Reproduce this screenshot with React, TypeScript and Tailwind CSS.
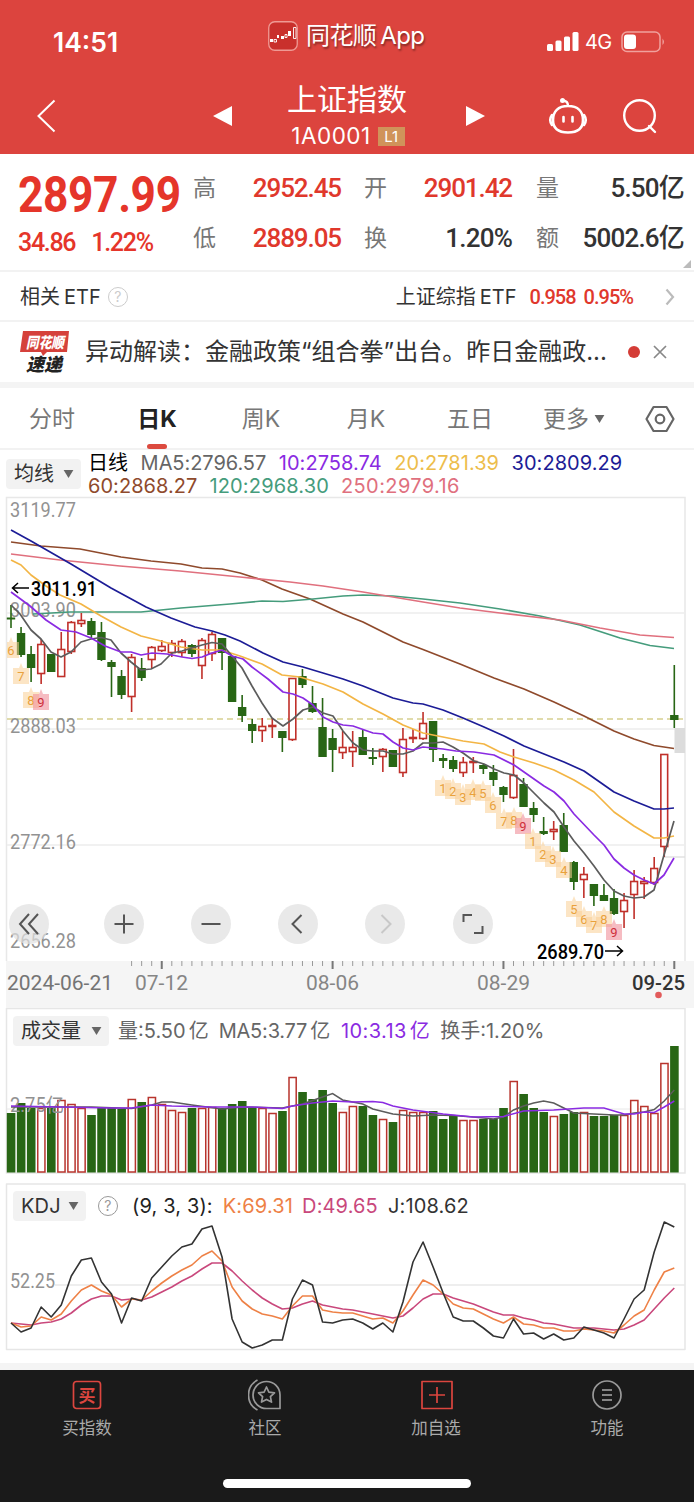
import type { ReactNode } from "react";

// [high, bodyTop, bodyBottom, low, up]
const CANDLES: [number, number, number, number, 0 | 1][] = [
  [605, 617.5, 619.5, 628, 0], [627, 633, 655, 657, 0], [646, 654, 668, 682, 0], [639, 644, 674, 684, 1],
  [654, 654, 672, 672, 0], [632, 649, 677, 677, 1], [621, 622, 652, 654, 1], [613, 620, 624, 627, 1],
  [618, 621, 635, 638, 0], [622, 632, 660, 661, 0], [660, 662, 667, 697, 0], [670, 676, 695, 699, 0],
  [654, 657, 697, 712, 1], [658, 668, 678, 681, 0], [646, 647, 660, 668, 1], [640, 646, 651, 652, 1],
  [640, 643, 653, 657, 1], [639, 641, 653, 657, 1], [644, 645, 654, 657, 0], [638, 640, 666, 679, 1],
  [632, 634, 654, 661, 1], [638, 638, 653, 670, 0], [656, 656, 702, 702, 0], [695, 707, 716, 722, 0],
  [719, 724, 731, 743, 0], [718, 726, 731, 742, 1], [718, 725, 727, 738, 1], [731, 731, 738, 752, 0],
  [678, 678, 740, 741, 1], [669, 676, 685, 688, 0], [686, 703, 712, 713, 0], [698, 727, 757, 757, 0],
  [729, 738, 750, 772, 0], [731, 747, 753, 759, 1], [731, 747, 752, 767, 1], [730, 737, 755, 755, 0],
  [748, 757, 759, 765, 0], [748, 749, 757, 772, 1], [750, 750, 767, 767, 0], [728, 739, 773, 777, 1],
  [729, 737, 739, 743, 1], [712, 723, 739, 740, 1], [721, 721, 750, 762, 0], [754, 758, 761, 768, 0],
  [756, 760, 769, 772, 0], [757, 762, 773, 777, 1], [757, 761, 762, 773, 1], [764, 765, 769, 774, 0],
  [765, 772, 780, 786, 0], [786, 787, 795, 802, 0], [749, 775, 798, 799, 1], [778, 784, 807, 807, 0],
  [802, 808, 815, 822, 0], [817, 831, 834, 835, 0], [821, 829, 832, 840, 1], [813, 825, 852, 852, 0],
  [861, 862, 882, 890, 0], [867, 874, 880, 898, 1], [884, 884, 896, 906, 0], [884, 895, 901, 901, 0],
  [889, 898, 914, 915, 0], [893, 900, 912, 928, 1], [870, 881, 895, 919, 1], [877, 881, 884, 899, 1],
  [857, 868, 883, 885, 1], [754, 754, 847, 857, 1], [665, 715, 720, 728, 0],
];

const VOLUME = [
  113, 103, 108, 108, 108, 100, 104, 108, 115, 108, 108, 109, 99, 102, 97, 104, 110, 112, 108, 108, 107, 108, 104,
  101, 108, 108, 113, 111, 77, 92, 99, 90, 103, 112, 106, 106, 115, 119, 122, 110, 112, 112, 111, 119, 115, 120, 120,
  119, 119, 108, 81, 94, 108, 112, 116, 114, 112, 112, 116, 116, 115, 115, 100, 106, 113, 63, 46,
];

const J = [
  143, 152, 148, 127, 137, 125, 96, 80, 78, 102, 114, 143, 118, 121, 98, 87, 76, 67, 64, 49, 46, 77, 139, 162, 168,
  165, 160, 160, 119, 100, 105, 142, 143, 140, 139, 143, 149, 143, 152, 122, 82, 62, 87, 113, 137, 141, 141, 148, 156,
  158, 139, 154, 153, 159, 154, 160, 158, 147, 150, 153, 158, 139, 119, 110, 72, 42, 47,
];
const K = [
  143, 147, 146, 137, 140, 134, 121, 110, 105, 111, 115, 127, 119, 120, 111, 103, 96, 90, 85, 76, 71, 81, 107, 121,
  129, 134, 136, 139, 126, 116, 116, 130, 132, 133, 133, 136, 139, 138, 143, 131, 115, 100, 105, 114, 124, 128, 129,
  134, 139, 143, 137, 144, 145, 148, 148, 151, 151, 149, 150, 151, 153, 145, 136, 130, 110, 92, 88,
];
const D = [
  143, 144, 145, 143, 142, 139, 133, 125, 119, 116, 116, 120, 119, 120, 117, 112, 107, 101, 96, 89, 83, 83, 91, 101,
  110, 118, 124, 129, 128, 124, 121, 125, 127, 129, 130, 132, 134, 136, 138, 136, 128, 119, 114, 114, 118, 121, 124,
  128, 132, 135, 135, 138, 140, 143, 144, 146, 148, 148, 148, 149, 150, 149, 145, 140, 129, 118, 108,
];

const MA_LINES = [
  { color: "#8f4a2c", points: "11,542 41,546 80,549 121,557 151,561 181,564 202,568 222,569 240,573 262,580 282,589 310,599 343,614 363,622 383,632 403,642 423,649.5 460,664 494,678 524,689 554,702 584,716 614,731 634,739 654,745.5 674,748.5" },
  { color: "#459c7c", points: "33,614 70,612 100,612 141,612 181,608 230,604 262,601 283,601.5 313,599 343,596 363,595 393,596 423,599 460,603 500,609 540,616 580,625 620,638 650,645.5 674,648.5" },
  { color: "#e0707e", points: "11,554 60,560 120,566 180,571 240,577 290,582 323,586 363,592 423,602 460,608 500,613 560,620 600,628 640,635 674,637.5" },
  { color: "#1c1c96", points: "11,530 31,541 71,564 111,588 146,607 171,618 195,627 212,631 225,635 240,641 263,653 283,662 303,667 323,673 343,679 363,686 393,698 413,703 423,704 443,710 463,718 484,727 504,736 524,746 544,754 564,762 584,771 604,785 614,792 634,801 654,809 664,809 674,808" },
  { color: "#f3b545", points: "11,560 21,565 31,575 46,586 60,595 81,604 101,616 121,627 141,636 161,641 181,647 202,650 221,650 240,656 262,664 282,675 300,677 323,684 343,692 363,704 383,714 403,725 423,733 443,737 463,741 484,744 500,752 514,757 534,763 554,770 574,780 594,792 614,812 634,826 654,838 664,838 674,836" },
  { color: "#5c5c5c", points: "11,605 20,614 31,630 41,639 51,652 61,657 71,652 81,642 91,639 101,637.5 111,640 121,653 131,662 141,670 151,669 161,664 172,653 182,651 202,645 212,642.5 222,644 232,656 242,668 252,686 262,703 272,718 283,726 293,719 303,710 313,707 323,713 333,716 343,731 353,743 363,750 373,751 383,751 393,754 403,754 413,751 423,743 433,743 443,742 453,747 463,753 474,761 484,764 494,769 504,773 514,775 524,783 534,793 544,803 554,812 564,827 574,841 584,853 594,866 604,880 614,891 624,896 634,898 644,897 654,890 664,855 674,821" },
  { color: "#8a2be2", points: "11,592 30,606 46,620 61,630 76,632 91,638 105,646 121,652 131,652 141,655 152,653 167,654 182,657 192,658.5 202,657 212,653 222,650 232,656 243,659 252,667 268,679 283,692 293,694 303,698 313,705 323,717 333,722 343,725 353,726 373,733 383,734 393,742 403,748 413,750 423,747 443,749 456,751 474,752 494,755 514,765 524,772 544,786 554,792 564,801 574,814 594,835 604,845 614,859 624,868 634,875 644,880 654,884 664,875 674,858" },
];

const VOL_MA5: [number, number][] = [
  [0, 107], [8, 107], [12, 108.5], [14, 105], [15, 102], [16, 102], [18, 105], [21, 109], [23, 107], [27, 108], [29, 104],
  [31, 97], [32, 93.5], [33, 100], [35, 104], [36, 109], [38, 114], [40, 116], [42, 115], [44, 115.5], [46, 117],
  [48, 119], [49, 117], [50, 110], [51, 106], [52, 103], [53, 101], [54, 103], [55, 108], [56, 113], [58, 114],
  [60, 115], [61, 115], [62, 113], [63, 112], [64, 109.5], [65, 101], [66, 90],
];
const VOL_MA10: [number, number][] = [
  [0, 106], [5, 107], [10, 108], [12, 108], [14, 105], [16, 106], [20, 107], [24, 107], [27, 108.5], [28, 106],
  [30, 103], [32, 101], [34, 102], [36, 101.5], [37, 102.5], [38, 106], [40, 110], [43, 114], [46, 117], [49, 116.5],
  [51, 111], [54, 110], [57, 108], [59, 108], [61, 114], [62, 114], [63, 112], [64, 112.5], [65, 107], [66, 101],
];

// [x, y, count]
const MARKS: [number, number, number][] = [
  [11, 650, 6], [21, 676, 7], [31, 700, 8], [41, 702, 9],
  [443, 788, 1], [453, 791, 2], [463, 797, 3], [473, 792, 4], [483, 793, 5], [493, 805, 6], [504, 821, 7],
  [514, 820, 8], [523, 826, 9], [533, 841, 1], [543, 854, 2], [553, 859, 3], [564, 870, 4],
  [574, 909, 5], [584, 919, 6], [594, 925, 7], [604, 919, 8], [614, 932, 9],
];

const TABS = [
  { label: "分时", width: "w-[104px]" },
  { label: "日K", width: "w-[106px]", active: true },
  { label: "周K", width: "w-[102px]" },
  { label: "月K", width: "w-[108px]" },
  { label: "五日", width: "w-[100px]" },
];

const AXIS_FONT = "Roboto, 'Noto Sans CJK SC', sans-serif";

const px = (i: number) => 11 + i * 10.05;
const series = (values: number[]) => values.map((v, i) => `${px(i)},${v + 1180}`).join(" ");
const pairs = (values: [number, number][]) => values.map(([i, v]) => `${px(i)},${v + 1000}`).join(" ");

function AxisLabel({ x, y, w, children, color = "#929292", weight = 400 }: { x: number; y: number; w: number; children: string; color?: string; weight?: number }) {
  return (
    <text x={x} y={y} textLength={w} lengthAdjust="spacingAndGlyphs" fontSize="19.5" fontWeight={weight} fontFamily={AXIS_FONT} fill={color}>
      {children}
    </text>
  );
}

function Caret({ className = "" }: { className?: string }) {
  return (
    <svg viewBox="0 0 12 9" className={`h-2 w-[11px] ${className}`}>
      <path d="M.5 0h11L6 9z" fill="#666" />
    </svg>
  );
}

function StatusBar() {
  return (
    <div className="flex h-[78px] items-center pt-[6px] text-white">
      <span className="w-[215px] pt-[2px] pl-[53px] text-[26.5px] font-semibold">14:51</span>
      <div className="flex w-[332px] items-center pb-3 pl-[53px]">
        <svg viewBox="0 0 30 30" className="size-[30px]">
          <rect x="0.75" y="0.75" width="28.5" height="28.5" rx="6" fill="#c9302c" stroke="#ef9a94" strokeWidth="1.3" />
          <g fill="#fff">
            <path d="M2 18h3v3H2zM9 14h2v3H9zM13 15h3v3h-3zM20 10h3v5h-3z" />
            <path d="M6 18.5h2.5v2.5H6zM17 13.5h2v3h-2zM25.5 6.5h2.5v11h-2.5z" fill="none" stroke="#fff" strokeWidth="0.9" />
          </g>
        </svg>
        <span className="ml-2 flex gap-1 text-[24px] leading-none tracking-[-0.6px] [text-shadow:1px_2px_2px_#0006]">
          <span>同花顺</span>
          <span>App</span>
        </span>
      </div>
      <svg viewBox="0 0 32 20" className="h-5 w-8" fill="#fff">
        <rect x="0" y="12" width="6" height="7" rx="1.5" />
        <rect x="8.5" y="8.5" width="6" height="10.5" rx="1.5" />
        <rect x="17" y="4.5" width="6" height="14.5" rx="1.5" />
        <rect x="25.5" y="0" width="6" height="19" rx="1.5" />
      </svg>
      <span className="ml-[6px] w-9 text-[20px] tracking-[-0.6px]">4G</span>
      <svg viewBox="0 0 46 22" className="h-[22px] w-[46px]">
        <rect x="1" y="1" width="38" height="19.5" rx="5" fill="none" stroke="#f0a19d" strokeWidth="1.5" />
        <rect x="3" y="3.5" width="12" height="14.5" rx="3" fill="#fff" />
        <path d="M41.5 7.5q3 3.3 0 6.5z" fill="#f0a19d" />
      </svg>
    </div>
  );
}

function TitleBar() {
  return (
    <div className="flex h-[76px] items-center text-white">
      <svg viewBox="0 0 20 34" className="ml-9 h-[34px] w-5">
        <path d="M18.5 1.5 2.5 17l16 15.5" fill="none" stroke="#fff" strokeWidth="2" />
      </svg>
      <svg viewBox="0 0 19 20" className="ml-[157px] h-5 w-[19px]">
        <path d="M19 0v20L0 10z" fill="#fff" />
      </svg>
      <div className="flex w-[234px] flex-col items-center">
        <span className="mr-1 text-[30px] leading-[36px]">上证指数</span>
        <span className="mt-1 mr-[2px] flex items-center text-[22.5px] leading-[30px] tracking-[0.5px]">
          1A0001
          <span className="ml-[7px] h-[19px] w-[27px] bg-[#d0935a] text-center text-[15px] leading-[19px] tracking-normal">L1</span>
        </span>
      </div>
      <svg viewBox="0 0 19 20" className="h-5 w-[19px]">
        <path d="M0 0v20l19-10z" fill="#fff" />
      </svg>
      <svg viewBox="0 0 40 38" className="ml-[63px] h-[38px] w-10" fill="none" stroke="#fff" strokeWidth="2.6">
        <path d="M20 9c-10 0-15 5.500-15 14s5 12.500 15 12.500S35 31.500 35 23 30 9 20 9zM20 9c0-3.500-1-5-5-5.500" />
        <circle cx="14.5" cy="3.5" r="1.2" fill="#fff" />
        <path d="M4 18q-3.500 5 0 10M36 18q3.500 5 0 10M15.500 20v4.500M24.500 20v4.500" strokeLinecap="round" />
      </svg>
      <svg viewBox="0 0 36 36" className="ml-[34px] size-9" fill="none" stroke="#fff" strokeWidth="2.4">
        <circle cx="17.5" cy="17.5" r="15.3" />
        <path d="m27 28 6 6" strokeLinecap="round" />
      </svg>
    </div>
  );
}

function Stat({ label, value, red = false, className }: { label: string; value: string; red?: boolean; className: string }) {
  return (
    <div className={`flex h-[50px] items-center justify-between ${className}`}>
      <span className="text-[23px] text-[#777]">{label}</span>
      <span className={`font-[Roboto,'Noto_Sans_CJK_SC',sans-serif] text-[26px] font-medium ${red ? "tracking-[-1.1px] text-[#e0382c]" : "tracking-[-0.8px] text-[#333]"}`}>{value}</span>
    </div>
  );
}

function Quote() {
  return (
    <section className="relative flex h-[118px] border-b-2 border-[#f2f2f2] bg-white">
      <div className="w-[193px] pl-[18px] font-[Roboto,sans-serif] text-[#e5352a]">
        <div className="mt-[15px] origin-left scale-x-[0.885] text-[50px] leading-[52px] font-bold tracking-[-0.4px] whitespace-nowrap">2897.99</div>
        <div className="mt-[8px] flex gap-4 text-[25px] leading-[28px] font-medium tracking-[-1.3px]">
          <span>34.86</span>
          <span>1.22%</span>
        </div>
      </div>
      <div className="pt-[9px]">
        <div className="flex">
          <Stat label="高" value="2952.45" red className="w-[148px]" />
          <Stat label="开" value="2901.42" red className="ml-[23px] w-[148px]" />
          <Stat label="量" value="5.50亿" className="ml-[24px] w-[148px]" />
        </div>
        <div className="flex">
          <Stat label="低" value="2889.05" red className="w-[148px]" />
          <Stat label="换" value="1.20%" className="ml-[23px] w-[148px]" />
          <Stat label="额" value="5002.6亿" className="ml-[24px] w-[148px]" />
        </div>
      </div>
      <svg viewBox="0 0 8 8" className="absolute right-[3px] bottom-[2px] size-2">
        <path d="M8 0v8H0z" fill="#bbb" />
      </svg>
    </section>
  );
}

function RelatedEtf() {
  return (
    <section className="flex h-[50px] items-center border-b-2 border-[#f2f2f2] bg-white pt-[2px] pr-[19px] pl-5 text-[20px] text-[#333]">
      <span className="flex gap-1">
        <span>相关</span>
        <span>ETF</span>
      </span>
      <Help className="ml-[7px] text-[#ccc]" />
      <span className="ml-auto flex gap-1">
        <span>上证综指</span>
        <span>ETF</span>
      </span>
      <span className="ml-[13px] flex gap-2 font-[Roboto,sans-serif] font-medium tracking-[-1px] text-[#e0382c]">
        <span>0.958</span>
        <span>0.95%</span>
      </span>
      <svg viewBox="0 0 10 18" className="ml-[32px] h-[18px] w-[10px]">
        <path d="m1.5 1.5 6.500 7.500-6.500 7.500" fill="none" stroke="#bbb" strokeWidth="2.2" />
      </svg>
    </section>
  );
}

function Help({ className }: { className: string }) {
  return (
    <span className={`flex size-5 items-center justify-center rounded-full border-[1.5px] border-current text-[14px] leading-none ${className}`}>?</span>
  );
}

function News() {
  return (
    <section className="flex h-[60px] items-center bg-white pl-5">
      <svg viewBox="0 0 50 44" className="mr-[15px] h-11 w-[50px] overflow-visible" fontFamily="'Noto Sans CJK SC', sans-serif" fontWeight="900">
        <path d="M3 1h46l-2 21H27l-4 4-2-4H0z" fill="#d5413b" />
        <text x="6" y="18" fontSize="15" textLength="38" fill="#fff" fontStyle="italic" lengthAdjust="spacingAndGlyphs">同花顺</text>
        <text x="6" y="41" fontSize="18" textLength="36" fill="#222" fontStyle="italic">速递</text>
      </svg>
      <p className="w-[530px] text-[24px] whitespace-nowrap text-[#333]">异动解读：金融政策“组合拳”出台。昨日金融政...</p>
      <span className="ml-[13px] size-3 rounded-full bg-[#d43c36]" />
      <svg viewBox="0 0 14 14" className="ml-[13px] size-[14px]">
        <path d="m1 1 12 12M13 1 1 13" stroke="#888" strokeWidth="1.7" />
      </svg>
    </section>
  );
}

function PeriodTabs() {
  return (
    <nav className="flex h-[62px] items-center border-b-2 border-[#f2f2f2] bg-white text-[23px] text-[#777]">
      {TABS.map((tab) => (
        <div key={tab.label} className={`relative flex h-full items-center justify-center pt-[2px] ${tab.width} ${tab.active ? "font-bold text-[#222]" : ""}`}>
          {tab.label}
          {tab.active && <span className="absolute -bottom-px h-[5px] w-5 rounded-sm bg-[#dc4a3f]" />}
        </div>
      ))}
      <span className="ml-[23px] flex items-center pt-[2px]">
        更多
        <Caret className="ml-[5px]" />
      </span>
      <svg viewBox="0 0 30 28" className="mt-[2px] ml-10 h-7 w-[30px]" fill="none" stroke="#666" strokeWidth="2.2">
        <path d="M8.500 2h13L28.500 14l-7 12h-13L1.500 14z" strokeLinejoin="round" />
        <circle cx="15" cy="14" r="4.3" />
      </svg>
    </nav>
  );
}

function Picker({ children, className }: { children: ReactNode; className: string }) {
  return (
    <div className={`flex h-[30px] shrink-0 items-center justify-between rounded-sm bg-[#f2f2f2] pr-[7px] pl-2 text-[20px] text-[#333] ${className}`}>
      {children}
      <Caret />
    </div>
  );
}

function Averages() {
  return (
    <div className="flex h-[47px] items-start bg-white pl-[6px]">
      <Picker className="mt-[9px] w-[75px]">均线</Picker>
      <div className="mt-px ml-[7px] text-[20px] tracking-[0.05px] whitespace-nowrap">
        <div className="flex h-[23px] items-center gap-[12.5px]">
          <span className="text-black">日线</span>
          <span className="tracking-[-0.05px] text-[#666]">MA5:2796.57</span>
          <span className="text-[#8a2be2]">10:2758.74</span>
          <span className="text-[#edbd4c]">20:2781.39</span>
          <span className="text-[#1c1c96]">30:2809.29</span>
        </div>
        <div className="flex h-[23px] items-center gap-3">
          <span className="text-[#8f4a2c]">60:2868.27</span>
          <span className="tracking-[0.15px] text-[#459c7c]">120:2968.30</span>
          <span className="tracking-[0.4px] text-[#e0707e]">250:2979.16</span>
        </div>
      </div>
    </div>
  );
}

function RoundButton({ d, faded = false, className = "" }: { d: string; faded?: boolean; className?: string }) {
  return (
    <button className={`flex size-10 items-center justify-center rounded-full bg-[#e0e0e0]/70 ${className}`}>
      <svg viewBox="0 0 24 24" className="size-6" fill="none" stroke={faded ? "#c8c8c8" : "#555"} strokeWidth="2">
        <path d={d} />
      </svg>
    </button>
  );
}

function CandleChart() {
  return (
    <div className="relative z-10 h-[464px]">
      <svg viewBox="0 497 694 464" className="block h-[464px] w-[694px] overflow-visible">
        <path d="M6.500 961V497.500H685V961" fill="#fff" stroke="#e8e8e8" strokeWidth="1.5" />
        <path d="M7 613h678M7 729h678M7 845h678" stroke="#ededed" strokeWidth="1.5" />
        <path d="M7 719h678" stroke="#d6cf90" strokeWidth="1.3" strokeDasharray="6 4" />
        <rect x="674.5" y="728" width="10.5" height="25" fill="#dcdcdc" />
        <path d="M664 857h21" stroke="#ddd" strokeWidth="1.3" />
        <AxisLabel x={10} y={517} w={66}>3119.77</AxisLabel>
        <AxisLabel x={10} y={616.5} w={66}>3003.90</AxisLabel>
        <AxisLabel x={10} y={733} w={66}>2888.03</AxisLabel>
        <AxisLabel x={10} y={849} w={66}>2772.16</AxisLabel>
        <AxisLabel x={10} y={948} w={66}>2656.28</AxisLabel>
        {CANDLES.map(([high, top, bottom, low, up], i) => {
          const x = px(i);
          return up ? (
            <g key={i} stroke="#c0302a" strokeWidth="1.6">
              <path d={`M${x} ${high}V${top}M${x} ${bottom}V${low}`} />
              <rect x={x - 3.4} y={top + 0.5} width="6.8" height={Math.max(bottom - top - 1, 1)} fill="#fff" />
            </g>
          ) : (
            <g key={i} fill="#286615">
              <rect x={x - 0.8} y={high} width="1.6" height={low - high} />
              <rect x={x - 4.2} y={top} width="8.4" height={bottom - top} />
            </g>
          );
        })}
        {MA_LINES.map((line) => (
          <polyline key={line.color} points={line.points} fill="none" stroke={line.color} strokeWidth="1.7" strokeLinejoin="round" />
        ))}
        {MARKS.map(([x, y, n], i) => (
          <g key={i}>
            <path d={`M${Math.max(x - 8, 7)} ${y - 8}H${x - 2}L${x} ${y - 13}L${x + 2} ${y - 8}H${x + 8}V${y + 8}H${Math.max(x - 8, 7)}z`} fill={n === 9 ? "#f0909a" : "#fad096"} fillOpacity={n === 9 ? 0.6 : 0.55} />
            <text x={x} y={y + 5} textAnchor="middle" fontSize="13" fontFamily={AXIS_FONT} fill={n === 9 ? "#cf2f3c" : "#e9a13c"}>{n}</text>
          </g>
        ))}
        <path d="M29 588H12.500M18 583l-5.500 5 5.500 5M605 951h17.500M617 946l5.500 5-5.500 5" fill="none" stroke="#000" strokeWidth="1.5" />
        <AxisLabel x={31} y={595.5} w={66} color="#000" weight={500}>3011.91</AxisLabel>
        <AxisLabel x={537} y={958.5} w={67} color="#000" weight={500}>2689.70</AxisLabel>
      </svg>
      <div className="absolute bottom-[17px] left-[9px] flex">
        <RoundButton d="M12 2 3 12l9 10M21 2l-9 10 9 10" />
        <RoundButton d="M12 2.500v19M2.500 12h19" className="ml-[55px]" />
        <RoundButton d="M2.500 12h19" className="ml-[47px]" />
        <RoundButton d="m15.500 3-9 9 9 9" className="ml-[47px]" />
        <RoundButton d="m8.500 3 9 9-9 9" faded className="ml-[47px]" />
        <RoundButton d="M2.500 10V3H11M21.500 14v7H13" className="ml-[48px]" />
      </div>
    </div>
  );
}

function DateAxis() {
  const ticks = Array.from({ length: 55 }, (_, i) => i + 12);
  return (
    <svg viewBox="0 961 694 47" className="block h-[47px] w-[694px] bg-white">
      <rect x="6" y="961" width="688" height="47" fill="#f5f5f5" />
      {ticks.map((i) => {
        const major = (i - 15) % 17 === 0;
        return <rect key={i} x={px(i) - (major ? 1 : 0.5)} y="961" width={major ? 2 : 1} height={major ? 8 : 5} fill={major ? "#777" : "#999"} />;
      })}
      <AxisLabel x={7} y={990} w={106} color="#747474">2024-06-21</AxisLabel>
      <AxisLabel x={135} y={990} w={53} color="#858585">07-12</AxisLabel>
      <AxisLabel x={306} y={990} w={53} color="#858585">08-06</AxisLabel>
      <AxisLabel x={477} y={990} w={53} color="#858585">08-29</AxisLabel>
      <AxisLabel x={632} y={990} w={53} color="#333" weight={500}>09-25</AxisLabel>
      <circle cx="658.5" cy="995" r="3.3" fill="#e25b5b" />
    </svg>
  );
}

function VolumePanel() {
  return (
    <section className="relative h-[165px] bg-white">
      <svg viewBox="0 1008 694 166" className="block h-[166px] w-[694px]">
        <rect x="6.5" y="1008.5" width="678.5" height="164.5" fill="#fff" stroke="#e6e6e6" strokeWidth="1.5" />
        <path d="M7 1109h678" stroke="#e8e8e8" />
        {VOLUME.map((v, i) => {
          const x = px(i);
          const y = v + 1000;
          return CANDLES[i][4] ? (
            <rect key={i} x={x - 3.4} y={y + 0.5} width="7.2" height={1171.5 - y} fill="#fff" stroke="#b8342d" strokeWidth="1.5" />
          ) : (
            <rect key={i} x={x - 4.2} y={y} width="8.6" height={1172.5 - y} fill="#286615" />
          );
        })}
        <AxisLabel x={10} y={1112} w={54}>2.75亿</AxisLabel>
        <polyline points={pairs(VOL_MA5)} fill="none" stroke="#5c5c5c" strokeWidth="1.5" />
        <polyline points={pairs(VOL_MA10)} fill="none" stroke="#8a2be2" strokeWidth="1.5" />
      </svg>
      <div className="absolute top-2 left-[13px] flex items-center text-[20px] whitespace-nowrap text-[#666]">
        <Picker className="w-24">成交量</Picker>
        <span className="ml-[9px]">量:5.50<span className="ml-[3px]">亿</span></span>
        <span className="ml-[10px] tracking-[-0.2px]">MA5:3.77<span className="ml-[3px]">亿</span></span>
        <span className="ml-[11px] tracking-[0.4px] text-[#8a2be2]">10:3.13<span className="ml-[3px]">亿</span></span>
        <span className="ml-[10px]">换手:1.20%</span>
      </div>
    </section>
  );
}

function KdjPanel() {
  return (
    <section className="relative mt-[10px] h-[180px] bg-white">
      <svg viewBox="0 1183 694 168" className="block h-[168px] w-[694px]" fill="none" strokeWidth="1.6" strokeLinejoin="round">
        <rect x="6.5" y="1184" width="678.5" height="165.5" stroke="#e6e6e6" strokeWidth="1.5" />
        <path d="M55 1285h630" stroke="#e8e8e8" />
        <AxisLabel x={10} y={1288} w={45}>52.25</AxisLabel>
        <polyline points={series(D)} stroke="#c9487c" />
        <polyline points={series(K)} stroke="#ee8146" />
        <polyline points={series(J)} stroke="#333" />
      </svg>
      <div className="absolute top-2 left-[13px] flex items-center text-[20px] tracking-[0.15px] whitespace-nowrap">
        <Picker className="w-[73px]">KDJ</Picker>
        <Help className="ml-3 text-[#999]" />
        <span className="ml-[14px] text-[#222]">(9, 3, 3):</span>
        <span className="ml-[10px] text-[#ee8146]">K:69.31</span>
        <span className="ml-[9px] text-[#c9487c]">D:49.65</span>
        <span className="ml-[10px] text-[#333]">J:108.62</span>
      </div>
    </section>
  );
}

function NavItem({ label, className, children }: { label: string; className: string; children: ReactNode }) {
  return (
    <div className={`flex flex-col items-center ${className}`}>
      <svg viewBox="0 0 34 34" className="size-[34px]" fill="none" strokeWidth="1.7" strokeLinejoin="round">
        {children}
      </svg>
      <span className="mt-[4px] text-[16.5px] leading-6 text-[#aaa]">{label}</span>
    </div>
  );
}

function BottomBar() {
  return (
    <footer className="relative h-[132px] bg-[#1a1a1a] pt-2">
      <div className="flex">
        <NavItem label="买指数" className="ml-[37px] w-[100px]">
          <rect x="3.5" y="3.5" width="27" height="27" rx="3" stroke="#dc463f" />
          <text x="17" y="23.5" textAnchor="middle" fontSize="17" fontWeight="700" fontFamily="'Noto Sans CJK SC', sans-serif" fill="#dc463f">买</text>
        </NavItem>
        <NavItem label="社区" className="ml-[78px] w-[100px]">
          <path d="M32 30.500H18.500a13.500 13.500 0 1 1 13.500-13.500zM9.500 2a17 17 0 0 0 0 30" stroke="#999" />
          <path d="m18.500 9 2.400 5.100 5.600.7-4.100 3.800 1.100 5.500-5-2.700-5 2.700 1.100-5.500-4.100-3.800 5.600-.7z" stroke="#999" />
        </NavItem>
        <NavItem label="加自选" className="ml-[71px] w-[100px]">
          <path d="M3 3.500h30v27H3zM18 9v16M10 17h16" stroke="#dc463f" />
        </NavItem>
        <NavItem label="功能" className="ml-[71px] w-[100px]">
          <circle cx="17" cy="17" r="14" stroke="#999" />
          <path d="M12 12h10M12 17h10M12 22h10" stroke="#aaa" />
        </NavItem>
      </div>
      <div className="absolute bottom-[14px] left-[223px] h-[9px] w-[248px] rounded-full bg-white" />
    </footer>
  );
}

export default function App() {
  return (
    <main className="h-[1502px] w-[694px] overflow-hidden bg-white font-[Inter,'Noto_Sans_CJK_SC',sans-serif]">
      <header className="h-[154px] bg-[#dc443e]">
        <StatusBar />
        <TitleBar />
      </header>
      <Quote />
      <RelatedEtf />
      <News />
      <div className="h-[6px] bg-[#f4f4f4]" />
      <PeriodTabs />
      <Averages />
      <CandleChart />
      <DateAxis />
      <VolumePanel />
      <KdjPanel />
      <div className="h-[7px] bg-[#f4f4f4]" />
      <BottomBar />
    </main>
  );
}
